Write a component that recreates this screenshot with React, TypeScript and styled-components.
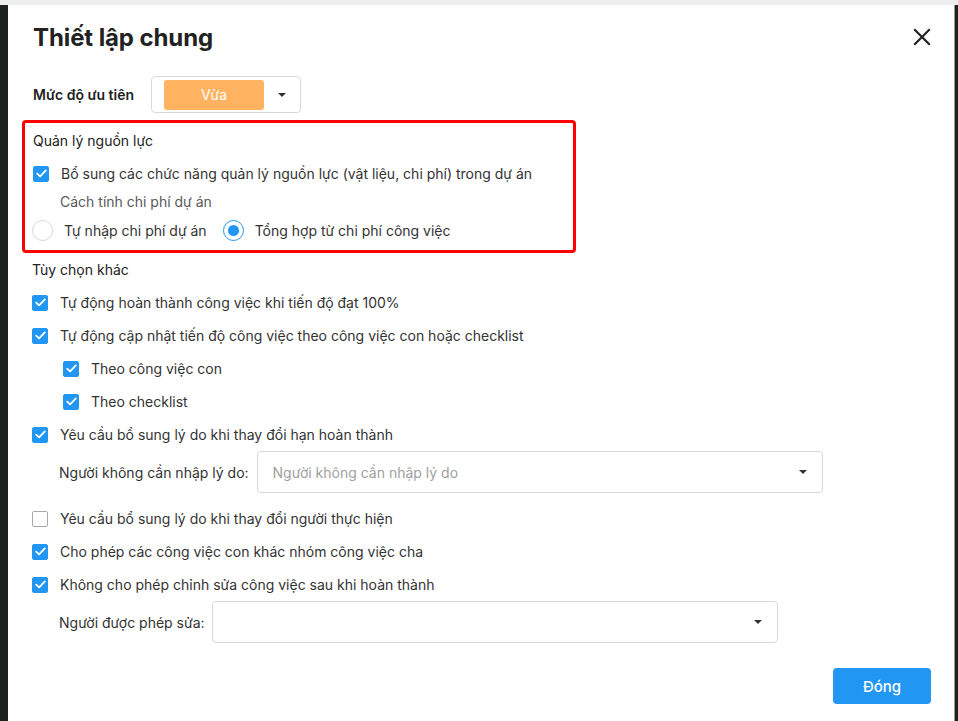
import React from "react";
import styled, { createGlobalStyle } from "styled-components";

const Global = createGlobalStyle`
  html, body { margin: 0; padding: 0; }
  body {
    font-family: Inter, "Noto Sans", sans-serif;
    font-size: 14px;
    color: #262626;
    overflow: hidden;
  }
  * { box-sizing: border-box; }
`;

const Backdrop = styled.div`
  width: 958px;
  height: 721px;
  padding: 5px 3px 0 8px;
  background: linear-gradient(#eeeeee 0 5px, #1a231e 5px);
  overflow: hidden;
`;

const Modal = styled.div`
  width: 947px;
  height: 716px;
  background: #fff;
  border-right: 1px solid #9a9a9a;
  padding: 0 23px 0 24px;
  display: flex;
  flex-direction: column;
`;

const Header = styled.div`
  height: 64px;
  display: flex;
  align-items: center;
  justify-content: space-between;
  padding-left: 1px;
`;

const Title = styled.h1`
  margin: 0;
  font-size: 24px;
  font-weight: 700;
  color: #222;
  letter-spacing: -0.1px;
`;

const CloseButton = styled.button`
  border: 0;
  background: none;
  padding: 0;
  width: 18px;
  height: 18px;
  display: flex;
  cursor: pointer;
`;

const PriorityRow = styled.div`
  margin-top: 7px;
  height: 37px;
  display: flex;
  align-items: center;
  gap: 17px;
  padding-left: 1px;
`;

const BoldLabel = styled.span`
  font-weight: 600;
  color: #1e1e1e;
  font-size: 14px;
`;

const PrioritySelect = styled.div`
  width: 150px;
  height: 37px;
  border: 1px solid #d9d9d9;
  border-radius: 4px;
  display: flex;
  align-items: center;
  padding: 0 14px 0 12px;
  justify-content: space-between;
`;

const Pill = styled.div`
  width: 100px;
  height: 30px;
  border-radius: 3px;
  background: #ffb360;
  color: #fff;
  font-size: 14px;
  display: flex;
  align-items: center;
  justify-content: center;
`;

const Caret = styled.span`
  width: 0;
  height: 0;
  border-left: 4px solid transparent;
  border-right: 4px solid transparent;
  border-top: 4px solid #333;
`;

const RedBox = styled.div`
  margin: 7px 0 0 -10px;
  width: 554px;
  border: 3px solid #ff0000;
  border-radius: 4px;
  padding: 0 0 2px 8px;
  display: flex;
  flex-direction: column;
`;

const SectionTitle = styled.div<{ $h?: number }>`
  height: ${(p) => p.$h ?? 33}px;
  display: flex;
  align-items: center;
  color: #222;
`;

const Row = styled.label<{ $indent?: number; $h?: number }>`
  height: ${(p) => p.$h ?? 33}px;
  display: flex;
  align-items: center;
  gap: 12px;
  padding-left: ${(p) => p.$indent ?? 0}px;
  color: #333;
  cursor: pointer;
`;

const Box = styled.span<{ $checked: boolean }>`
  width: 16px;
  height: 16px;
  border-radius: 2px;
  flex: none;
  display: flex;
  align-items: center;
  justify-content: center;
  background: ${(p) => (p.$checked ? "#2196f3" : "#fff")};
  border: 1px solid ${(p) => (p.$checked ? "#2196f3" : "#a8a8a8")};
`;

const SubNote = styled.div`
  height: 22px;
  display: flex;
  align-items: center;
  padding-left: 27px;
  color: #595959;
`;

const RadioRow = styled.div`
  height: 36px;
  display: flex;
  align-items: center;
  gap: 16px;
  margin-left: -1px;
`;

const RadioOption = styled.label`
  display: flex;
  align-items: center;
  gap: 11px;
  color: #333;
`;

const RadioCircle = styled.span<{ $on: boolean }>`
  width: 21px;
  height: 21px;
  border-radius: 50%;
  border: 1px solid ${(p) => (p.$on ? "#2196f3" : "#d6d6d6")};
  display: flex;
  align-items: center;
  justify-content: center;
  &::after {
    content: "";
    width: 11px;
    height: 11px;
    border-radius: 50%;
    background: ${(p) => (p.$on ? "#2196f3" : "transparent")};
  }
`;

const Options = styled.div`
  display: flex;
  flex-direction: column;
`;

const FieldRow = styled.div<{ $gap: number; $after?: number }>`
  display: flex;
  align-items: center;
  gap: ${(p) => p.$gap}px;
  padding-left: 27px;
  margin-bottom: ${(p) => p.$after ?? 0}px;
  color: #333;
`;

const SelectBox = styled.div`
  width: 566px;
  height: 42px;
  border: 1px solid #d9d9d9;
  border-radius: 4px;
  display: flex;
  align-items: center;
  justify-content: space-between;
  padding: 0 15px 0 15px;
  color: #a0a0a0;
`;

const Footer = styled.div`
  margin-top: 25px;
  display: flex;
  justify-content: flex-end;
`;

const PrimaryButton = styled.button`
  width: 98px;
  height: 36px;
  border: 0;
  border-radius: 4px;
  background: #2196f3;
  color: #fff;
  font-family: Inter, sans-serif;
  font-size: 15px;
  font-weight: 500;
  cursor: pointer;
`;

const Check = () => (
  <svg width="11" height="9" viewBox="0 0 11 9" fill="none">
    <path d="M1.2 4.6 L4.1 7.4 L9.8 1.4" stroke="#fff" strokeWidth="1.8" strokeLinecap="round" strokeLinejoin="round" />
  </svg>
);

const CheckItem: React.FC<{ checked?: boolean; indent?: number; children: React.ReactNode }> = ({
  checked = true,
  indent,
  children,
}) => (
  <Row $indent={indent}>
    <Box $checked={checked}>{checked && <Check />}</Box>
    <span>{children}</span>
  </Row>
);

export default function App() {
  return (
    <>
      <Global />
      <Backdrop>
        <Modal>
          <Header>
            <Title>Thiết lập chung</Title>
            <CloseButton aria-label="Đóng">
              <svg width="18" height="18" viewBox="0 0 18 18">
                <path d="M2 2 L16 16 M16 2 L2 16" stroke="#222" strokeWidth="2.2" strokeLinecap="square" />
              </svg>
            </CloseButton>
          </Header>

          <PriorityRow>
            <BoldLabel>Mức độ ưu tiên</BoldLabel>
            <PrioritySelect>
              <Pill>Vừa</Pill>
              <Caret />
            </PrioritySelect>
          </PriorityRow>

          <RedBox>
            <SectionTitle $h={34}>Quản lý nguồn lực</SectionTitle>
            <CheckItem>Bổ sung các chức năng quản lý nguồn lực (vật liệu, chi phí) trong dự án</CheckItem>
            <SubNote>Cách tính chi phí dự án</SubNote>
            <RadioRow>
              <RadioOption>
                <RadioCircle $on={false} />
                Tự nhập chi phí dự án
              </RadioOption>
              <RadioOption>
                <RadioCircle $on={true} />
                Tổng hợp từ chi phí công việc
              </RadioOption>
            </RadioRow>
          </RedBox>

          <Options>
            <SectionTitle>Tùy chọn khác</SectionTitle>
            <CheckItem>Tự động hoàn thành công việc khi tiến độ đạt 100%</CheckItem>
            <CheckItem>Tự động cập nhật tiến độ công việc theo công việc con hoặc checklist</CheckItem>
            <CheckItem indent={31}>Theo công việc con</CheckItem>
            <CheckItem indent={31}>Theo checklist</CheckItem>
            <CheckItem>Yêu cầu bổ sung lý do khi thay đổi hạn hoàn thành</CheckItem>
            <FieldRow $gap={8} $after={9}>
              <span>Người không cần nhập lý do:</span>
              <SelectBox>
                <span>Người không cần nhập lý do</span>
                <Caret />
              </SelectBox>
            </FieldRow>
            <CheckItem checked={false}>Yêu cầu bổ sung lý do khi thay đổi người thực hiện</CheckItem>
            <CheckItem>Cho phép các công việc con khác nhóm công việc cha</CheckItem>
            <CheckItem>Không cho phép chỉnh sửa công việc sau khi hoàn thành</CheckItem>
            <FieldRow $gap={7}>
              <span>Người được phép sửa:</span>
              <SelectBox>
                <span />
                <Caret />
              </SelectBox>
            </FieldRow>
          </Options>

          <Footer>
            <PrimaryButton>Đóng</PrimaryButton>
          </Footer>
        </Modal>
      </Backdrop>
    </>
  );
}
